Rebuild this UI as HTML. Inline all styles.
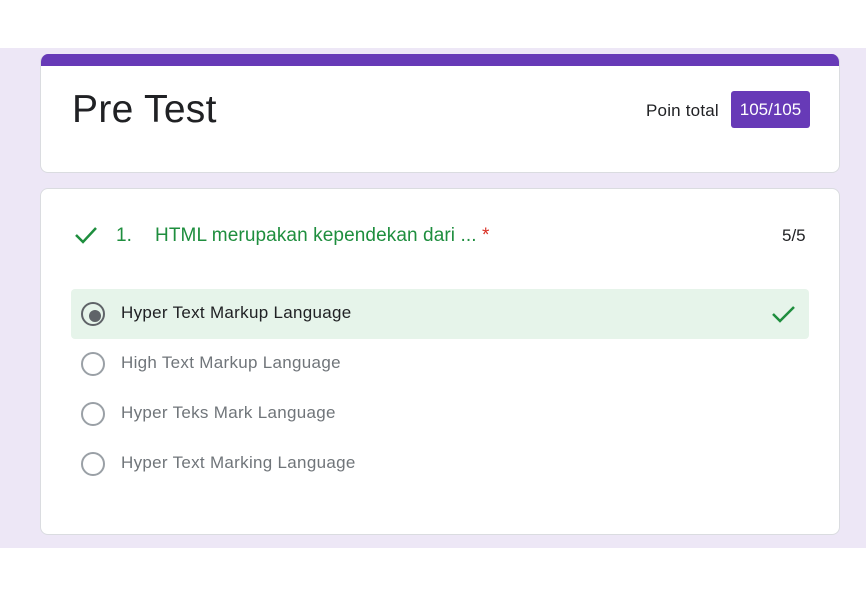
<!DOCTYPE html>
<html><head><style>
body{margin:0;width:866px;height:598px;background:#fff;font-family:"Liberation Sans",sans-serif;position:relative;overflow:hidden}
.bg{position:absolute;left:0;top:48px;width:866px;height:500px;background:#ede7f6}
.card{position:absolute;left:40px;width:800px;background:#fff;border:1px solid #dadce0;border-radius:8px;box-sizing:border-box}
.c1{top:54px;height:119px;border-top:none;overflow:hidden}
.bar{position:absolute;left:-1px;right:-1px;top:0;height:12px;background:#673ab7}
.title{position:absolute;left:31px;top:34px;font-size:39px;color:#202124;letter-spacing:0.3px}
.pt{position:absolute;left:605px;top:47px;font-size:17px;color:#202124;letter-spacing:0.2px}
.badge{position:absolute;left:690px;top:37px;width:79px;height:37px;background:#673ab7;border-radius:3px;color:#fff;font-size:17px;line-height:37px;text-align:center}
.c2{top:188px;height:347px}
.q{position:absolute;top:36px;font-size:19px;color:#1e8e3e;letter-spacing:0.1px}
.opt{position:absolute;left:30px;width:738px;height:50px;border-radius:4px}
.opt .r{position:absolute;left:10px;top:13px;width:20px;height:20px;border:2px solid #9aa0a6;border-radius:50%}
.opt .t{position:absolute;left:50px;top:14px;font-size:17px;color:#70757a;letter-spacing:0.3px}
</style></head><body>
<div class="bg"></div>
<div class="card c1"><div class="bar"></div><div class="title">Pre Test</div><div class="pt">Poin total</div><div class="badge">105/105</div></div>
<div class="card c2">
<svg style="position:absolute;left:33px;top:36px" width="24" height="20" viewBox="0 0 24 20"><path d="M2 10l7 7L22 3" fill="none" stroke="#1e8e3e" stroke-width="2.5"/></svg>
<div class="q" style="left:75px">1.</div>
<div class="q" style="left:114px">HTML merupakan kependekan dari ... <span style="color:#d93025">*</span></div>
<div style="position:absolute;left:741px;top:37px;font-size:17px;color:#202124">5/5</div>
<div class="opt" style="top:100px;background:#e6f4ea"><div class="r" style="border-color:#5f6368"></div><div style="position:absolute;left:18px;top:21px;width:12px;height:12px;border-radius:50%;background:#5f6368"></div><div class="t" style="color:#202124">Hyper Text Markup Language</div>
<svg style="position:absolute;left:700px;top:14px" width="26" height="22" viewBox="0 0 26 22"><path d="M2 11l7 7L23 4" fill="none" stroke="#1e8e3e" stroke-width="2.5"/></svg></div>
<div class="opt" style="top:150px"><div class="r"></div><div class="t">High Text Markup Language</div></div>
<div class="opt" style="top:200px"><div class="r"></div><div class="t">Hyper Teks Mark Language</div></div>
<div class="opt" style="top:250px"><div class="r"></div><div class="t">Hyper Text Marking Language</div></div>
</div>
</body></html>
